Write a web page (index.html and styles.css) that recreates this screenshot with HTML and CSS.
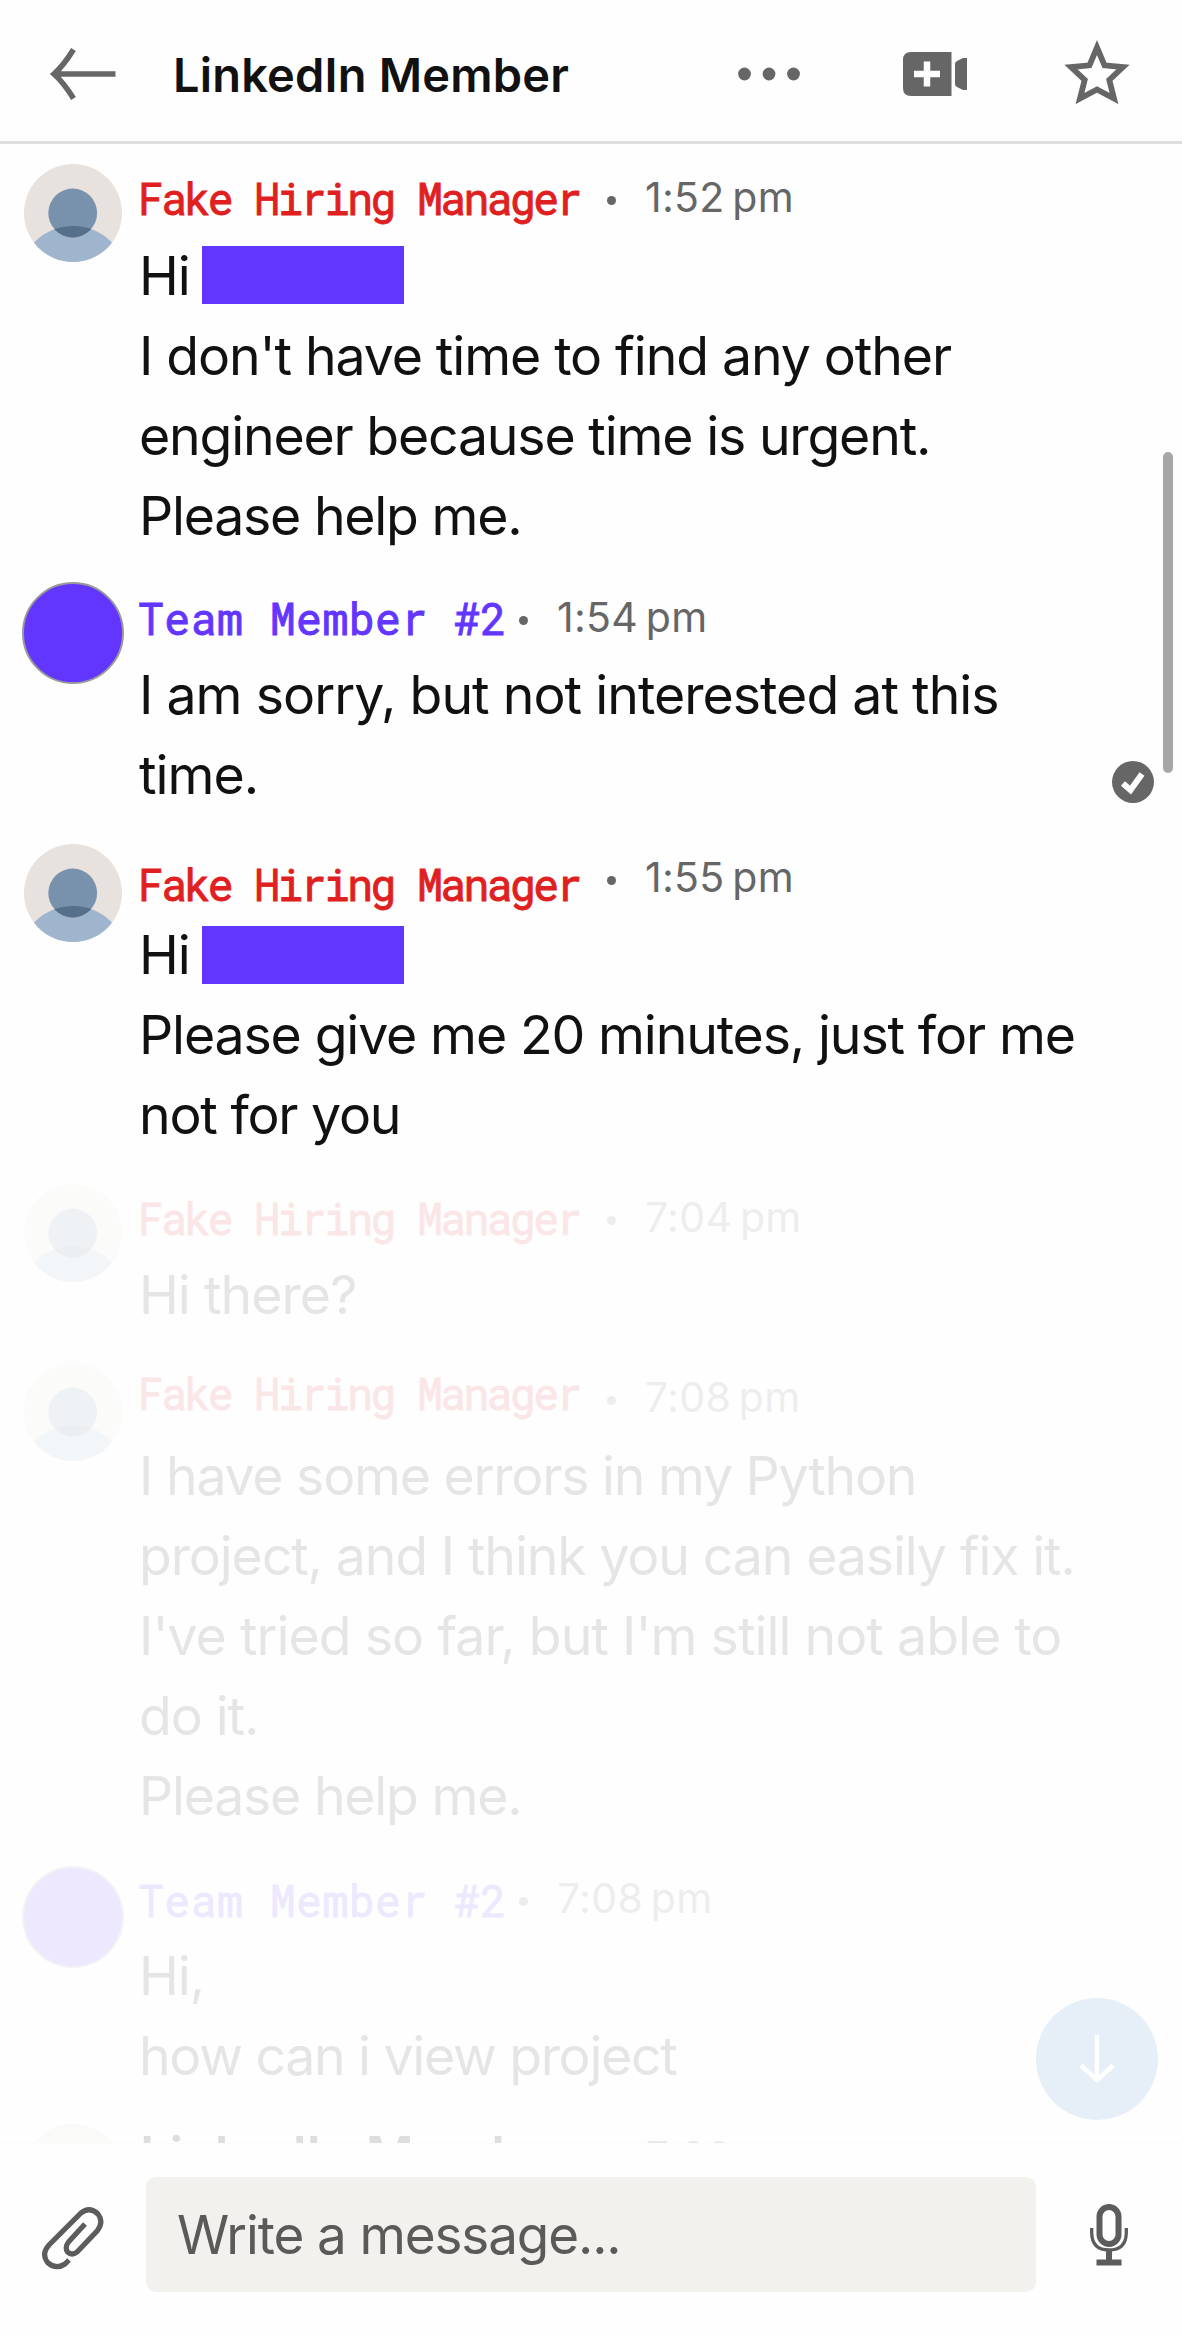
FILE: index.html
```html
<!DOCTYPE html>
<html lang="en">
<head>
<meta charset="utf-8">
<title>LinkedIn Member</title>
<link rel="stylesheet" href="styles.css">
</head>
<body>
<svg class="defs" width="0" height="0" aria-hidden="true">
  <defs>
    <clipPath id="round"><circle cx="49" cy="49" r="49"/></clipPath>
    <clipPath id="head"><circle cx="48.7" cy="49" r="24.4"/></clipPath>
    <symbol id="person" viewBox="0 0 98 98">
      <g clip-path="url(#round)">
        <rect width="98" height="98" fill="#e7e2dd"/>
        <circle cx="49" cy="116" r="54" fill="#9fb4cd"/>
        <circle cx="48.7" cy="49" r="24.4" fill="#7891ac"/>
        <circle cx="49" cy="116" r="54" fill="#56708c" clip-path="url(#head)"/>
      </g>
    </symbol>
  </defs>
</svg>
<div class="app">
  <header class="topbar">
    <svg class="back" width="66" height="54" viewBox="0 0 66 54" fill="none" stroke="#666" stroke-width="5.6"><path d="M65.500 27H6M23.500 2.500Q14 18 4 27Q14 36 23.500 51.500"/></svg>
    <h1 class="title">LinkedIn Member</h1>
    <svg class="more" width="64" height="14" viewBox="0 0 64 14" fill="#666"><circle cx="7.500" cy="7" r="6.400"/><circle cx="32" cy="7" r="6.400"/><circle cx="56.500" cy="7" r="6.400"/></svg>
    <svg class="video" width="64" height="44" viewBox="0 0 64 44"><path fill="#666" d="M8 0H48.500V44H8Q0 44 0 36V8Q0 0 8 0ZM52 12Q52 10 54 9L60 6H64V38H60L54 35Q52 34 52 32Z"/><path stroke="#fff" stroke-width="6.500" d="M11 22H37M24 9.500V34.500"/></svg>
    <svg class="star" width="66" height="64" viewBox="0 0 66 64"><path fill="none" stroke="#666" stroke-width="5.800" d="M33 7.500L40.500 25.300L59 27L45.300 40L50 58.500L33 49.500L16 58.500L20.700 40L7 27L25.500 25.300Z"/></svg>
  </header>

  <main class="thread">
    <article class="msg m1">
      <svg class="avatar"><use href="#person"/></svg>
      <div class="content">
        <div class="meta"><span class="name hiring">Fake Hiring Manager</span><i class="dot"></i><time>1:52&#8201;pm</time></div>
        <p class="greeting"><span>Hi</span><span class="redacted"></span></p>
        <p class="t110">I don't have time to find any other</p>
        <p class="t122">engineer because time is urgent.</p>
        <p class="t125">Please help me.</p>
      </div>
    </article>
    <article class="msg m2">
      <div class="avatar solid"></div>
      <div class="content">
        <div class="meta"><span class="name team">Team Member #2</span><i class="dot"></i><time>1:54&#8201;pm</time></div>
        <p class="t100">I am sorry, but not interested at this</p>
        <p class="t100">time.</p>
      </div>
      <svg class="sent" width="42" height="42" viewBox="0 0 42 42"><circle cx="21" cy="21" r="21" fill="#666"/><path d="M11 22.500L18.500 29L30 13" fill="none" stroke="#fff" stroke-width="6"/></svg>
    </article>
    <article class="msg m3">
      <svg class="avatar"><use href="#person"/></svg>
      <div class="content">
        <div class="meta"><span class="name hiring">Fake Hiring Manager</span><i class="dot"></i><time>1:55&#8201;pm</time></div>
        <p class="greeting"><span>Hi</span><span class="redacted"></span></p>
        <p class="t115">Please give me 20 minutes, just for me</p>
        <p class="t125">not for you</p>
      </div>
    </article>
    <article class="msg m4 faded">
      <svg class="avatar"><use href="#person"/></svg>
      <div class="content">
        <div class="meta"><span class="name hiring">Fake Hiring Manager</span><i class="dot"></i><time>7:04&#8201;pm</time></div>
        <p class="t100">Hi there?</p>
      </div>
    </article>
    <article class="msg m5 faded">
      <svg class="avatar"><use href="#person"/></svg>
      <div class="content">
        <div class="meta"><span class="name hiring">Fake Hiring Manager</span><i class="dot"></i><time>7:08&#8201;pm</time></div>
        <p class="t125">I have some errors in my Python</p>
        <p class="t115">project, and I think you can easily fix it.</p>
        <p class="t100">I've tried so far, but I'm still not able to</p>
        <p class="t110">do it.</p>
        <p class="t125">Please help me.</p>
      </div>
    </article>
    <article class="msg m6 faded">
      <div class="avatar solid"></div>
      <div class="content">
        <div class="meta"><span class="name team">Team Member #2</span><i class="dot"></i><time>7:08&#8201;pm</time></div>
        <p class="t100">Hi,</p>
        <p class="t135">how can i view project</p>
      </div>
    </article>
    <article class="msg m7 faded">
      <svg class="avatar"><use href="#person"/></svg>
      <div class="content">
        <div class="meta"><span class="name member">LinkedIn Member</span><time>7:09&#8201;pm</time></div>
      </div>
    </article>
    <div class="scrollbar"></div>
    <div class="jump"><svg width="36" height="50" viewBox="0 0 36 50" fill="none" stroke="#fff" stroke-width="4.400"><path d="M18 1V45M2 31.500L18 46L34 31.500"/></svg></div>
  </main>

  <footer class="composer">
    <svg class="clip" width="64" height="64" viewBox="0 0 64 64" fill="none" stroke="#5c5c5c" stroke-width="5.200"><path d="M44 18L27.500 36Q23.500 41 26.500 46Q31 50 36 46L56.500 24.500Q63 15.500 57 8Q48.500 0 40 7L8 39Q0 48 6.500 56.500Q15 64 24 58L28 54"/></svg>
    <div class="field">Write a message...</div>
    <svg class="mic" width="38" height="62" viewBox="0 0 38 62" fill="none" stroke="#5c5c5c"><rect x="9.500" y="3" width="19" height="37" rx="9.500" stroke-width="6"/><path stroke-width="3.300" d="M1.700 24V29Q2 46 19 46Q36 46 36.300 29V24"/><path stroke-width="6" d="M19 46V57M6.500 58.500H31.500"/></svg>
  </footer>
</div>
</body>
</html>
```
FILE: styles.css
```css
* { box-sizing: border-box; }
body { margin: 0; background: #fefefe; color: #111; font-family: Inter, "Liberation Sans", sans-serif; }
.defs { position: absolute; }
.app { width: 1182px; height: 2336px; display: flex; flex-direction: column; overflow: hidden; }

.topbar { height: 144px; flex: none; display: flex; align-items: center; padding: 6px 52px 0 50px; border-bottom: 3px solid #dedede; }
.title { margin: 2px 0 0 57px; width: 564px; font-size: 47px; line-height: 60px; font-weight: 600; letter-spacing: .18px; white-space: nowrap; }
.more { flex: none; }
.video { margin-left: 102px; flex: none; }
.star { margin: 0 0 4px 97px; flex: none; }

.thread { position: relative; flex: none; height: 2000px; padding-top: 20px; overflow: hidden; border-bottom: 1px solid #fbfbfb; }
.msg { display: flex; position: relative; padding-left: 24px; margin-bottom: 28px; }
.avatar { width: 98px; height: 98px; flex: none; margin-right: 18px; }
.solid { width: 102px; height: 102px; margin-left: -2px; margin-right: 16px; border-radius: 50%; background: #6236ff; border: 2px solid #999; }
.content { flex: none; width: 1000px; }
.meta { display: flex; align-items: flex-start; height: 71px; line-height: 50px; white-space: nowrap; }
.name { flex: none; font: 44.5px/50px "Roboto Mono", "Liberation Mono", monospace; margin-top: var(--name); -webkit-text-stroke: .9px currentColor; transform: scaleX(.97); transform-origin: 0 0; }
.hiring { width: 469px; margin-left: -2px; color: #e02020; letter-spacing: -2.73px; }
.team { width: 381px; margin-left: -2px; color: #6236ff; letter-spacing: .45px; }
.dot { flex: none; width: 9px; height: 9px; border-radius: 50%; background: #666; margin-top: calc(var(--time) + 24px); }
time { font-size: 41px; letter-spacing: .3px; color: #666; margin-left: 29px; margin-top: var(--time); }
.msg p { margin: 0 0 0 -1px; height: 80px; line-height: 80px; font-size: 53.6px; white-space: pre; }
.msg .greeting { display: flex; letter-spacing: -1px; }
.greeting span:first-child { width: 63px; }
.redacted { width: 202px; height: 58px; margin-top: 11px; background: #6236ff; }

.msg .t100 { letter-spacing: -.98px; }
.msg .t110 { letter-spacing: -1.1px; }
.msg .t115 { letter-spacing: -1.15px; }
.msg .t122 { letter-spacing: -1.2px; }
.msg .t125 { letter-spacing: -1.25px; }
.msg .t135 { letter-spacing: -1.33px; }

.m1 { --name: 9px; --time: 8px; margin-bottom: 26px; }
.m2 { --name: 11px; --time: 10px; }
.m3 { --name: 15px; --time: 8px; margin-bottom: 29px; }
.m4 { --name: 9px; --time: 8px; }
.m5 { --name: 5px; --time: 9px; margin-bottom: 30px; }
.m6 { --name: 9px; --time: 7px; }
.m7 { --name: 0; --time: 7px; }
.m1 .meta { height: 72px; }
.m1 .redacted { margin-top: 10px; }
.m5 .meta, .m2 .meta { height: 73px; }
.m2 { margin-bottom: 29px; }
.m6 .meta { height: 70px; }
.faded { opacity: .1; }
.m7 .member { width: 506px; margin-left: 0; font: 600 52px/64px Inter, sans-serif; letter-spacing: 0; -webkit-text-stroke: 0; transform: none; }
.m7.faded { opacity: .13; }
.m7 time { margin-left: 0; }

.sent { position: absolute; left: 1112px; top: 179px; }
.scrollbar { position: absolute; left: 1163px; top: 308px; width: 10px; height: 321px; border-radius: 5px; background: #a6a6a6; }
.jump { position: absolute; left: 1036px; top: 1854px; width: 122px; height: 122px; border-radius: 50%; background: #e6eff8; display: flex; align-items: center; justify-content: center; }

.composer { flex: 1; display: flex; align-items: flex-start; padding: 33px 54px 0 41px; }
.clip { margin-top: 29px; flex: none; }
.field { margin-left: 41px; width: 890px; height: 115px; border-radius: 10px; background: #f2f1ee; color: #5b5a58; font-size: 53px; letter-spacing: -1.12px; line-height: 117px; padding-left: 31px; white-space: pre; }
.mic { margin: 27px 0 0 54px; flex: none; }
```
